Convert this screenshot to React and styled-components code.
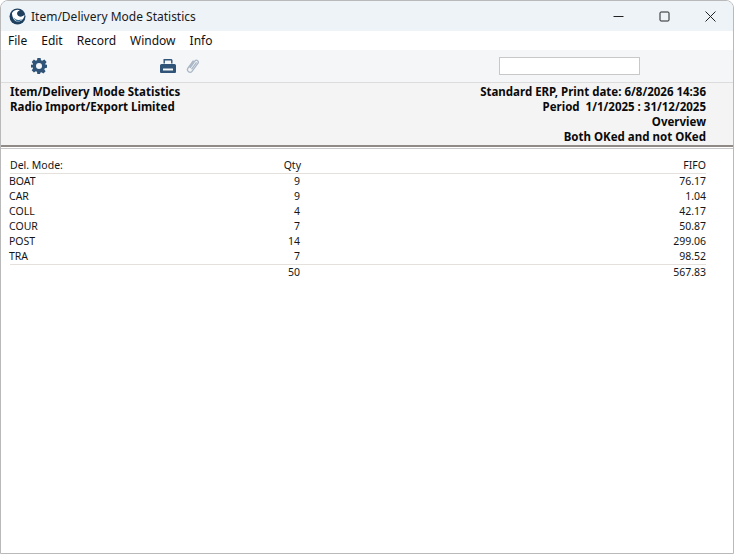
import React from 'react';
import styled, {createGlobalStyle} from "styled-components";

const Global = createGlobalStyle`
  html, body {
    margin: 0;
    padding: 0;
    background: #fff;
  }
  body {
    font-family: "Noto Sans", "Liberation Sans", sans-serif;
  }
`;
const Window = styled.div`
  width: 734px;
  height: 554px;
  box-sizing: border-box;
  border: 1px solid #b9b9b9;
  border-top-left-radius: 8px;
  border-top-right-radius: 8px;
  overflow: hidden;
  display: flex;
  flex-direction: column;
  background: #fff;
`;
const TitleBar = styled.div`
  height: 30px;
  flex: none;
  display: flex;
  align-items: center;
  background: #eef3f8;
  padding-left: 8px;
`;
const TitleText = styled.span`
  margin-left: 5px;
  font-size: 12px;
  color: #1a1a1a;
  flex-grow: 1;
`;
const WinButton = styled.div`
  width: 46px;
  height: 30px;
  display: flex;
  align-items: center;
  justify-content: center;
`;
const MenuBar = styled.div`
  height: 19px;
  flex: none;
  display: flex;
  align-items: center;
  gap: 14px;
  padding-left: 7px;
  background: #fff;
  font-size: 12px;
  color: #111;
`;
const Toolbar = styled.div`
  height: 32px;
  flex: none;
  display: flex;
  align-items: center;
  background: #f5f6f7;
  border-bottom: 1px solid #dcdcdc;
  padding-left: 30px;
`;
const ToolIcon = styled.div`
  display: flex;
  margin-left: ${p => p.$gap || 0}px;
`;
const SearchBox = styled.div`
  width: 139px;
  height: 16px;
  margin-left: 299px;
  background: #fff;
  border: 1px solid #c8c8c8;
`;
const ReportHeader = styled.div`
  height: 64px;
  flex: none;
  box-sizing: border-box;
  padding: 1px 27px 0 9px;
  display: flex;
  justify-content: space-between;
  background: #f4f4f4;
  border-bottom: 2px solid #8f8a86;
  font-size: 11.5px;
  font-weight: 700;
  line-height: 15px;
  color: #0a0a0a;
`;
const RightBlock = styled.div`
  text-align: right;
  white-space: pre;
`;
const Body = styled.div`
  flex-grow: 1;
  margin-top: 1px;
  border-top: 1px solid #c9c9c9;
  padding: 9px 27px 0 8px;
  font-size: 10.5px;
  line-height: 15px;
  color: #151515;
`;
const Row = styled.div`
  display: grid;
  grid-template-columns: 210px 81px 1fr;
  height: 15px;
  margin-left: ${p => p.$line ? 1 : 0}px;
  border-bottom: ${p => p.$line ? '1px solid #e4e0dc' : 'none'};
  box-sizing: content-box;
`;
const Num = styled.span`
  text-align: right;
`;

const rows = [
  ['BOAT', '9', '76.17'],
  ['CAR', '9', '1.04'],
  ['COLL', '4', '42.17'],
  ['COUR', '7', '50.87'],
  ['POST', '14', '299.06'],
  ['TRA', '7', '98.52'],
];

const Logo = () => (
  <svg width="17" height="17" viewBox="0 0 17 17">
    <circle cx="8.5" cy="8.5" r="8" fill="#1f3f5f"/>
    <path d="M3 5C5 1.8 9 1 11 2.5C8 3 7 6 9.5 8C11.5 9.5 14 8.5 15.5 6.5C15.5 11 12 14 8 13.5C5 13 3 9 3 5Z" fill="#fff"/>
    <path d="M4.5 9C6 12 10 13 13 11C11 14.5 6 14.5 4.5 9Z" fill="#2f6a94"/>
  </svg>
);
const Gear = () => (
  <svg width="16" height="16" viewBox="0 0 16 16">
    <path fillRule="evenodd" fill="#2f5478" d="M6.4 0h3.2l.4 2.2 1.2.6L13.4 1.6l2.2 2.4-1.3 1.8.5 1.2L16 6.6v3.2l-2.2.4-.5 1.2 1.3 1.8-2.2 2.2-1.9-1.2-1.2.5-.4 2.2H6.4L6 13.7l-1.2-.5-1.9 1.2L.7 12.2 2 10.4l-.5-1.2L0 9.8V6.6l1.5.4.5-1.2L.7 4l2.2-2.4 1.9 1.2L6 2.2 6.4 0ZM8 5a3 3 0 1 0 0 6 3 3 0 0 0 0-6Z"/>
  </svg>
);
const Printer = () => (
  <svg width="16" height="14" viewBox="0 0 16 14">
    <path fill="#2f5478" d="M3.5 0h8l1 1v3.5h-1.4V1.4H4.9v3.1H3.5V1ZM1.5 5h13A1.5 1.5 0 0 1 16 6.5V13a1 1 0 0 1-1 1H1a1 1 0 0 1-1-1V6.5A1.5 1.5 0 0 1 1.5 5ZM3 9.5v2h10v-2Z"/>
  </svg>
);
const Clip = () => (
  <svg width="14" height="16" viewBox="0 0 14 16" fill="none" stroke="#a9b6c6" strokeWidth="1.3" strokeLinecap="round">
    <path d="M4.2 9.5 9.2 2.6a2 2 0 0 1 3 2.4L6 13.4a2.6 2.6 0 0 1-4.2-3L7.2 3"/>
    <path d="M5.8 10.8 10.2 4.8"/>
  </svg>
);

const App = () => {
  return (
    <Window>
      <Global/>
      <TitleBar>
        <Logo/>
        <TitleText>Item/Delivery Mode Statistics</TitleText>
        <WinButton>
          <svg width="11" height="11" viewBox="0 0 11 11"><path d="M0.5 5.5h10" stroke="#222"/></svg>
        </WinButton>
        <WinButton>
          <svg width="11" height="11" viewBox="0 0 11 11"><rect x="1" y="1" width="9" height="9" rx="1" fill="none" stroke="#222"/></svg>
        </WinButton>
        <WinButton>
          <svg width="11" height="11" viewBox="0 0 11 11"><path d="M0.5 0.5l10 10M10.5 0.5l-10 10" stroke="#222"/></svg>
        </WinButton>
      </TitleBar>
      <MenuBar>
        <span>File</span>
        <span>Edit</span>
        <span>Record</span>
        <span>Window</span>
        <span>Info</span>
      </MenuBar>
      <Toolbar>
        <ToolIcon><Gear/></ToolIcon>
        <ToolIcon $gap={113}><Printer/></ToolIcon>
        <ToolIcon $gap={10}><Clip/></ToolIcon>
        <SearchBox/>
      </Toolbar>
      <ReportHeader>
        <div>
          <div>Item/Delivery Mode Statistics</div>
          <div>Radio Import/Export Limited</div>
        </div>
        <RightBlock>
          <div>Standard ERP, Print date: 6/8/2026 14:36</div>
          <div>Period  1/1/2025 : 31/12/2025</div>
          <div>Overview</div>
          <div>Both OKed and not OKed</div>
        </RightBlock>
      </ReportHeader>
      <Body>
        <Row $line>
          <span>Del. Mode:</span>
          <Num>Qty</Num>
          <Num>FIFO</Num>
        </Row>
        {rows.map(r => (
          <Row key={r[0]}>
            <span>{r[0]}</span>
            <Num>{r[1]}</Num>
            <Num>{r[2]}</Num>
          </Row>
        ))}
        <Row $line style={{height: 0}}/>
        <Row>
          <span/>
          <Num>50</Num>
          <Num>567.83</Num>
        </Row>
      </Body>
    </Window>
  );
};

export default App;
